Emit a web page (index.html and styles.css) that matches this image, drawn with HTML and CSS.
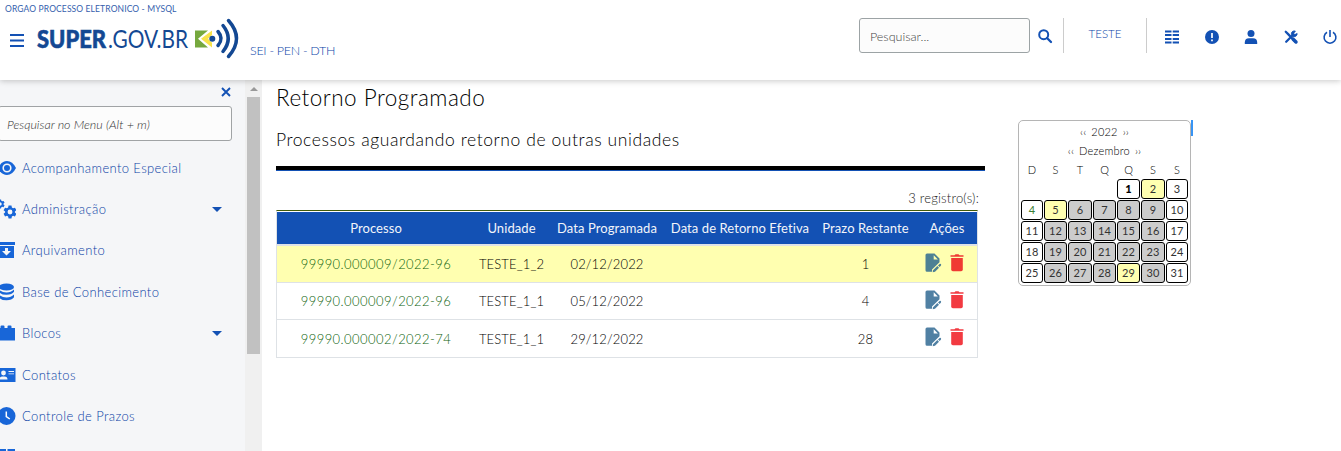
FILE: index.html
```html
<!DOCTYPE html>
<html lang="pt-BR">
<head>
<meta charset="utf-8">
<title>Retorno Programado</title>
<link rel="stylesheet" href="styles.css">
</head>
<body>
<svg class="defs" aria-hidden="true">
  <symbol id="edit" viewBox="0 0 17 20"><path fill="currentColor" fill-rule="evenodd" d="M2 .5h7.500l5 5v3.800L7 16.500v2.300H2Q.5 18.800.5 17.300V2Q.5.500 2 .5zM8.700 2.300v4.200h4.200zM7.800 17.400l4.500-4.300 1.700 1.700-4 4-2.200.5zM13 12.400l1.600-1.500q.6-.4 1.200.2t.2 1.300L14.700 14z"/></symbol>
  <symbol id="trash" viewBox="0 0 14 18"><path fill="currentColor" d="M.5 1.300H4.500L5.500.3h3l1 1h4v1.500H.5z"/><path fill="currentColor" d="M1.200 4h11.600v11.500q0 1.700-1.700 1.700H2.900q-1.700 0-1.700-1.700z"/></symbol>
  <symbol id="gear" viewBox="0 0 24 24"><path fill="currentColor" fill-rule="evenodd" d="M9.500 1h5l.7 3.300 2 1.200 3.300-1 2.500 4.300-2.600 2.200v2l2.600 2.200-2.500 4.300-3.300-1-2 1.200-.7 3.300h-5l-.7-3.300-2-1.200-3.300 1L1 15.200 3.600 13v-2L1 8.800l2.500-4.300 3.300 1 2-1.200zM12 7.800a4.200 4.200 0 1 0 0 8.400 4.200 4.200 0 0 0 0-8.400z"/></symbol>
</svg>
<header class="topbar">
  <div class="brand-side">
    <div class="org">ORGAO PROCESSO ELETRONICO - MYSQL</div>
    <div class="brand-row">
      <svg class="burger" viewBox="0 0 14 13"><path d="M0 1h14M0 6.500h14M0 12h14" stroke="#1351b4" stroke-width="1.800"/></svg>
      <svg class="logo" viewBox="0 0 204 42">
        <text x="0" y="30" class="logo-bold" textLength="69" lengthAdjust="spacingAndGlyphs">SUPER</text>
        <text x="71" y="30" class="logo-light" textLength="80" lengthAdjust="spacingAndGlyphs">.GOV.BR</text>
        <path d="M158 12.500h13l-10 8.300 10 8.700h-13z" fill="#76a83e"/>
        <path d="M175 12.500v4.500l-4 3.800 4 3.900v4.800l-11-8.700z" fill="#f8e34b"/>
        <circle cx="175.300" cy="20.800" r="3" fill="#134893"/>
        <path d="M181 13.500q6 7 0 14M186 7.500q10.500 13 0 26M191.500 2.500q16 18 0 36" fill="none" stroke="#134893" stroke-width="3.500" stroke-linecap="round"/>
      </svg>
      <span class="unit">SEI - PEN - DTH</span>
    </div>
  </div>
  <div class="tools">
    <div class="search">Pesquisar...</div>
    <svg class="lens" viewBox="0 0 14 14"><circle cx="5.700" cy="5.700" r="4.500" fill="none" stroke="#1351b4" stroke-width="2"/><path d="m9 9 4 4" stroke="#1351b4" stroke-width="2.300" stroke-linecap="round"/></svg>
    <div class="user">TESTE</div>
    <nav class="icons">
      <svg viewBox="0 0 14 14"><path d="M0 1.500h6.500M7.700 1.500H14M0 5h6.500M7.700 5H14M0 9h6.500M7.700 9H14M0 12.500h6.500M7.700 12.500H14" stroke="#1351b4" stroke-width="1.800"/></svg>
      <svg viewBox="0 0 14 14"><circle cx="7" cy="7" r="7" fill="#1351b4"/><path d="M7 3v5M7 9.500v1.700" stroke="#fff" stroke-width="1.700"/></svg>
      <svg viewBox="0 0 14 14"><circle cx="7" cy="3.500" r="3.500" fill="#1351b4"/><path d="M.8 14v-1.500q0-4.300 4.200-4.300h4q4.200 0 4.200 4.300V14z" fill="#1351b4"/></svg>
      <svg viewBox="0 0 16 16"><path d="m2 2 3 3 8 8.500M2.500 13.500l8-8" stroke="#1351b4" stroke-width="2.600" stroke-linecap="round"/><path d="m10.500 10.500 3.200 3.200" stroke="#1351b4" stroke-width="4" stroke-linecap="round"/><path d="M13 1.300A3.300 3.300 0 1 0 15 4l-2.500 1.200-1.500-1.500z" fill="#1351b4" stroke="#1351b4"/></svg>
      <svg viewBox="0 0 14 14"><path d="M4 2.200a5.900 5.900 0 1 0 6 0M7 0v7" fill="none" stroke="#1351b4" stroke-width="1.600"/></svg>
    </nav>
  </div>
</header>
<div class="body">
  <aside class="sidebar">
    <div class="menu">
      <svg class="close" viewBox="0 0 10 10"><path d="m1 1 8 8M9 1 1 9" stroke="#1351b4" stroke-width="1.900"/></svg>
      <div class="menu-search">Pesquisar no Menu (Alt + m)</div>
      <ul class="items">
        <li><svg viewBox="0 0 18 18"><path fill="#1866d8" d="M0 9Q3.500 2 9 2t9 7q-3.500 7-9 7T0 9z"/><circle cx="9" cy="9" r="3.800" fill="#1866d8" stroke="#f5f6f8" stroke-width="1.600"/></svg><span>Acompanhamento Especial</span></li>
        <li><svg class="gears" viewBox="0 0 18 20"><use href="#gear" x="-3" y="0" width="10" height="10"/><use href="#gear" x="5" y="6" width="14" height="14"/></svg><span>Administração</span><i class="caret"></i></li>
        <li><svg viewBox="0 0 18 18"><path fill="#1866d8" fill-rule="evenodd" d="M0 1h17v3H0zM1 5h15v12H1zm6 2v3H4l4.500 4.500L13 10h-3V7z"/></svg><span>Arquivamento</span></li>
        <li><svg viewBox="0 0 18 18"><ellipse cx="8.500" cy="4" rx="7.500" ry="3.600" fill="#1866d8"/><path d="M1 6.500q3 3 7.500 3t7.500-3v2.300q-2 3-7.500 3T1 8.800zM1 11.500q3 3 7.500 3t7.500-3v2.800q-2 3-7.500 3t-7.500-3z" fill="#1866d8"/></svg><span>Base de Conhecimento</span></li>
        <li><svg viewBox="0 0 18 18"><path fill="#1866d8" d="M0 4h2.500V2.500q0-1 1-1h2q1 0 1 1V4h3V2.500q0-1 1-1h2q1 0 1 1V4H17v12.500H0z"/></svg><span>Blocos</span><i class="caret"></i></li>
        <li><svg viewBox="0 0 18 18"><path fill="#1866d8" d="M0 2h17.500v14H0z"/><path fill="#f5f6f8" d="M1.500 13.500q0-3 3-3h2q3 0 3 3zM10.500 5H16v1h-5.500zM10.500 7.500H16v.8h-5.500z"/><circle cx="5.500" cy="7" r="2.400" fill="#f5f6f8"/></svg><span>Contatos</span></li>
        <li><svg viewBox="0 0 18 18"><circle cx="8.500" cy="9" r="9" fill="#1866d8"/><path d="M8.300 4.500v5l3.500 2.500" fill="none" stroke="#fff" stroke-width="1.500"/></svg><span>Controle de Prazos</span></li>
        <li><svg viewBox="0 0 18 18"><path fill="#1866d8" d="M0 1h8v7H0zM9.500 1H17v7H9.500z"/></svg></li>
      </ul>
    </div>
    <div class="scroll"><i class="arrow"></i><i class="thumb"></i></div>
  </aside>
  <main class="main">
    <section class="content">
      <h1>Retorno Programado</h1>
      <h2>Processos aguardando retorno de outras unidades</h2>
      <div class="rule"></div>
      <div class="count">3 registro(s):</div>
      <div class="table">
        <div class="row head"><span>Processo</span><span>Unidade</span><span>Data Programada</span><span>Data de Retorno Efetiva</span><span>Prazo Restante</span><span>Ações</span></div>
        <div class="row late"><a>99990.000009/2022-96</a><span>TESTE_1_2</span><span class="date">02/12/2022</span><span></span><span>1</span><span class="acts"><svg class="edit"><use href="#edit"/></svg><svg class="trash"><use href="#trash"/></svg></span></div>
        <div class="row"><a>99990.000009/2022-96</a><span>TESTE_1_1</span><span class="date">05/12/2022</span><span></span><span>4</span><span class="acts"><svg class="edit"><use href="#edit"/></svg><svg class="trash"><use href="#trash"/></svg></span></div>
        <div class="row"><a>99990.000002/2022-74</a><span>TESTE_1_1</span><span class="date">29/12/2022</span><span></span><span>28</span><span class="acts"><svg class="edit"><use href="#edit"/></svg><svg class="trash"><use href="#trash"/></svg></span></div>
      </div>
    </section>
    <section class="calendar">
      <div class="cal-nav"><b>‹‹</b><span>2022</span><b>››</b></div>
      <div class="cal-nav"><b>‹‹</b><span>Dezembro</span><b>››</b></div>
      <div class="days names"><span>D</span><span>S</span><span>T</span><span>Q</span><span>Q</span><span>S</span><span>S</span></div>
      <div class="days">
        <i class="skip"></i><span class="today">1</span><span class="mark">2</span><span>3</span>
        <span class="green">4</span><span class="mark">5</span><span class="past">6</span><span class="past">7</span><span class="past">8</span><span class="past">9</span><span>10</span>
        <span>11</span><span class="past">12</span><span class="past">13</span><span class="past">14</span><span class="past">15</span><span class="past">16</span><span>17</span>
        <span>18</span><span class="past">19</span><span class="past">20</span><span class="past">21</span><span class="past">22</span><span class="past">23</span><span>24</span>
        <span>25</span><span class="past">26</span><span class="past">27</span><span class="past">28</span><span class="mark">29</span><span class="past">30</span><span>31</span>
      </div>
    </section>
    <i class="cursor"></i>
  </main>
</div>
</body>
</html>
```
FILE: styles.css
```css
* { box-sizing: border-box; }
body { margin: 0; height: 451px; overflow: hidden; background: #fff; color: #333; font: 300 13px/16px Lato, sans-serif; display: flex; flex-direction: column; }
svg { display: block; flex: none; overflow: visible; }
.defs { width: 0; height: 0; position: absolute; }
i { font-style: normal; display: block; }

.topbar { height: 80px; flex: none; display: flex; justify-content: space-between; box-shadow: 0 1px 6px rgba(0,0,0,.22); z-index: 1; background: #fff; }
.brand-side { padding: 3px 0 0 5px; color: #1351b4; }
.org { font-size: 8.500px; line-height: 12px; font-weight: 400; color: #3460ad; white-space: nowrap; letter-spacing: .12px; }
.brand-row { display: flex; padding: 3px 0 0 5px; }
.burger { width: 14px; height: 13px; margin-top: 16px; }
.logo { width: 204px; height: 42px; margin-left: 13px; }
.logo-bold { font: 900 25px Lato; fill: #134893; stroke: #134893; stroke-width: .6px; }
.logo-light { font: 400 25px Lato; fill: #134893; }
.unit { margin: 25px 0 0 9px; font-size: 12.500px; color: #0a44a8; white-space: nowrap; letter-spacing: -.3px; }
.tools { display: flex; padding-top: 18px; }
.search { width: 171px; height: 35px; border: 1px solid #9ca3a5; border-radius: 3px; background: #fcfcfc; padding: 10px; font-size: 12.500px; color: #444; }
.lens { width: 14px; height: 14px; margin: 11px 0 0 8px; }
.user { margin-left: 11px; width: 84px; height: 35px; border: solid #ccc; border-width: 0 1px; text-align: center; padding-top: 8px; font-size: 11.500px; color: #0a44a8; }
.icons { display: flex; gap: 25.500px; padding: 12px 4px 0 18px; }
.icons svg { width: 14px; height: 14px; }

.body { display: flex; flex: 1; min-height: 0; }
.sidebar { width: 262px; display: flex; background: #f5f6f8; flex: none; overflow: hidden; }
.menu { width: 245px; }
.close { width: 10px; height: 10px; margin: 7px 0 0 221px; }
.menu-search { width: 234px; height: 35px; margin: 9px 0 0 -2px; border: 1px solid #a0a3a5; border-radius: 3px; background: #fcfcfc; padding: 10px 8px; font-size: 12.500px; font-style: italic; color: #333; }
.items { list-style: none; margin: 6px 0 0; padding: 0; }
.items li { height: 41.400px; display: flex; align-items: center; color: #0a3fa5; letter-spacing: .38px; }
.items svg { width: 18px; height: 18px; margin: 0 7px 0 -2px; color: #1866d8; overflow: hidden; }
.items span { margin-left: -1px; }
.items .gears { height: 20px; }
.caret { margin: 0 23px 0 auto; border: 5px solid transparent; border-top-color: #1351b4; border-bottom: 0; }
.scroll { width: 17px; background: #f0f0f0; padding: 7px 2px 0; }
.arrow { margin: 0 auto; width: 8px; border: 4px solid transparent; border-bottom-color: #999; border-top: 0; }
.thumb { height: 257px; margin-top: 6px; background: #c1c1c1; }

.main { display: flex; padding-left: 14px; flex: 1; }
.content { width: 709px; }
h1, h2 { margin: 0; font-weight: 300; white-space: nowrap; color: #000; }
h1 { font-size: 22.500px; line-height: 26px; padding: 5px 0 0; letter-spacing: .48px; }
h2 { font-size: 17.500px; line-height: 22px; margin-top: 18px; letter-spacing: .58px; }
.rule { height: 5px; margin-top: 15px; background: #000; border-bottom: 1px solid #1351b4; }
.count { width: 703px; text-align: right; padding-top: 19px; height: 39px; color: #222; letter-spacing: .2px; }
.table { width: 702px; border: 1px solid #dee2e6; border-top: 1px solid #435b08; padding-top: 1px; }
.row { display: grid; grid-template-columns: 198px 73px 118px 148px 103px 1fr; height: 37px; align-items: center; text-align: center; border-bottom: 1px solid #dee2e6; white-space: nowrap; color: #000; letter-spacing: .15px; }
.row:last-child { border: 0; }
.head { height: 34px; background: #1351b4; color: #f2f5fa; border-bottom-width: 2px; font-weight: 400; letter-spacing: .08px; }
.late { background: #ffffb0; }
.row a { color: #0d5f0d; letter-spacing: .45px; }
.acts { display: flex; gap: 8px; padding-left: 8px; align-items: center; height: 33px; padding-bottom: 3px; }
.edit { width: 17px; height: 20px; color: #5080a3; }
.trash { width: 14px; height: 18px; color: #f23a41; }
.late .edit { color: #4e8194; }
.late .trash { color: #f03a33; }

.calendar { width: 173px; height: 166px; margin: 40px 0 0 33px; border: 1px solid #b5b5b5; border-radius: 5px; padding: 1px 2px 0; font-size: 11px; color: #000; }
.cal-nav { height: 19px; display: flex; justify-content: center; align-items: center; gap: 5px; letter-spacing: .2px; }
.cal-nav b { font-weight: 300; }
.days { display: grid; grid-template-columns: 22px 23px 24px 23px 23px 24px 22px; gap: 1px; grid-auto-rows: 20px; }
.days span { border: 1px solid #000; border-radius: 3px; display: flex; align-items: center; justify-content: center; font-weight: 400; color: #333; }
.names { height: 19px; }
.days.names span { border: 0; height: 20px; font-weight: 300; color: #000; }
.skip { grid-column: span 4; }
.past { background: #ccc; }
.mark { background: #ffffb0; }
.days .today { font-weight: 900; color: #000; }
.days .green { color: #3a7d32; }
.cursor { width: 2px; height: 16px; background: #3794f5; margin-top: 40px; }
```
